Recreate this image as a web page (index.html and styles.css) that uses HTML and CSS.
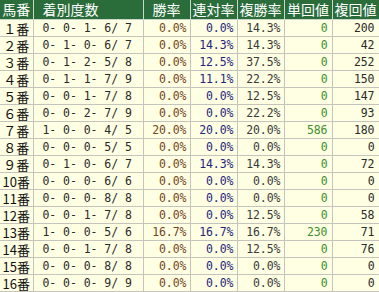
FILE: index.html
```html
<!DOCTYPE html>
<html lang="ja">
<head>
<meta charset="utf-8">
<title>馬番別成績</title>
<link rel="stylesheet" href="styles.css">
</head>
<body>
<table class="stats">
  <colgroup>
    <col class="c-no"><col class="c-rec"><col class="c-pct"><col class="c-pct"><col class="c-pct"><col class="c-val"><col class="c-val2">
  </colgroup>
  <thead>
    <tr><th>馬番</th><th class="h-rec">着別度数</th><th>勝率</th><th>連対率</th><th>複勝率</th><th>単回値</th><th>複回値</th></tr>
  </thead>
  <tbody>
    <tr><td class="no">１番</td><td class="rec">0- 0- 1- 6/ 7</td><td class="win">0.0%</td><td class="ren">0.0%</td><td class="fuku">14.3%</td><td class="tan">0</td><td class="fv">200</td></tr>
    <tr><td class="no">２番</td><td class="rec">0- 1- 0- 6/ 7</td><td class="win">0.0%</td><td class="ren">14.3%</td><td class="fuku">14.3%</td><td class="tan">0</td><td class="fv">42</td></tr>
    <tr><td class="no">３番</td><td class="rec">0- 1- 2- 5/ 8</td><td class="win">0.0%</td><td class="ren">12.5%</td><td class="fuku">37.5%</td><td class="tan">0</td><td class="fv">252</td></tr>
    <tr><td class="no">４番</td><td class="rec">0- 1- 1- 7/ 9</td><td class="win">0.0%</td><td class="ren">11.1%</td><td class="fuku">22.2%</td><td class="tan">0</td><td class="fv">150</td></tr>
    <tr><td class="no">５番</td><td class="rec">0- 0- 1- 7/ 8</td><td class="win">0.0%</td><td class="ren">0.0%</td><td class="fuku">12.5%</td><td class="tan">0</td><td class="fv">147</td></tr>
    <tr><td class="no">６番</td><td class="rec">0- 0- 2- 7/ 9</td><td class="win">0.0%</td><td class="ren">0.0%</td><td class="fuku">22.2%</td><td class="tan">0</td><td class="fv">93</td></tr>
    <tr><td class="no">７番</td><td class="rec">1- 0- 0- 4/ 5</td><td class="win">20.0%</td><td class="ren">20.0%</td><td class="fuku">20.0%</td><td class="tan">586</td><td class="fv">180</td></tr>
    <tr><td class="no">８番</td><td class="rec">0- 0- 0- 5/ 5</td><td class="win">0.0%</td><td class="ren">0.0%</td><td class="fuku">0.0%</td><td class="tan">0</td><td class="fv">0</td></tr>
    <tr><td class="no">９番</td><td class="rec">0- 1- 0- 6/ 7</td><td class="win">0.0%</td><td class="ren">14.3%</td><td class="fuku">14.3%</td><td class="tan">0</td><td class="fv">72</td></tr>
    <tr><td class="no">10番</td><td class="rec">0- 0- 0- 6/ 6</td><td class="win">0.0%</td><td class="ren">0.0%</td><td class="fuku">0.0%</td><td class="tan">0</td><td class="fv">0</td></tr>
    <tr><td class="no">11番</td><td class="rec">0- 0- 0- 8/ 8</td><td class="win">0.0%</td><td class="ren">0.0%</td><td class="fuku">0.0%</td><td class="tan">0</td><td class="fv">0</td></tr>
    <tr><td class="no">12番</td><td class="rec">0- 0- 1- 7/ 8</td><td class="win">0.0%</td><td class="ren">0.0%</td><td class="fuku">12.5%</td><td class="tan">0</td><td class="fv">58</td></tr>
    <tr><td class="no">13番</td><td class="rec">1- 0- 0- 5/ 6</td><td class="win">16.7%</td><td class="ren">16.7%</td><td class="fuku">16.7%</td><td class="tan">230</td><td class="fv">71</td></tr>
    <tr><td class="no">14番</td><td class="rec">0- 0- 1- 7/ 8</td><td class="win">0.0%</td><td class="ren">0.0%</td><td class="fuku">12.5%</td><td class="tan">0</td><td class="fv">76</td></tr>
    <tr><td class="no">15番</td><td class="rec">0- 0- 0- 8/ 8</td><td class="win">0.0%</td><td class="ren">0.0%</td><td class="fuku">0.0%</td><td class="tan">0</td><td class="fv">0</td></tr>
    <tr><td class="no">16番</td><td class="rec">0- 0- 0- 9/ 9</td><td class="win">0.0%</td><td class="ren">0.0%</td><td class="fuku">0.0%</td><td class="tan">0</td><td class="fv">0</td></tr>
  </tbody>
</table>
</body>
</html>
```
FILE: styles.css
```css
html, body {
  margin: 0;
  padding: 0;
  background: #ffffff;
}

.stats {
  border-collapse: collapse;
  table-layout: fixed;
  width: 379px;
  font-family: "DejaVu Sans Mono", monospace;
}

.c-no { width: 33px; }
.c-rec { width: 110px; }
.c-pct { width: 47px; }
.c-val { width: 48px; }
.c-val2 { width: 47px; }

.stats th {
  background: #2a6d3b;
  color: #ffffff;
  font-family: "Noto Sans CJK JP", sans-serif;
  font-weight: normal;
  font-size: 14px;
  height: 19px;
  line-height: 19px;
  padding: 0;
  text-align: center;
  white-space: nowrap;
  border: 1px solid #c9d6c9;
  border-top: none;
}

.stats th:first-child { border-left: none; }

.stats th.h-rec {
  text-align: left;
  padding-left: 9px;
}

.stats td {
  background: #ffffe3;
  height: 16px;
  line-height: 15px;
  padding: 0 4px 0 0;
  border: 1px solid #c4c4bc;
  font-size: 11.5px;
  letter-spacing: -0.05px;
  text-align: right;
  white-space: pre;
  color: #333333;
}

.stats td:first-child { border-left: none; }

.stats td.no {
  font-family: "Noto Sans CJK JP", sans-serif;
  font-size: 13px;
  line-height: 15px;
  letter-spacing: 0;
  text-align: center;
  padding: 0;
  color: #111111;
}

.stats td.rec {
  text-align: left;
  padding-left: 9px;
  color: #2a2a2a;
}

.stats td.win { color: #74451c; padding-right: 3px; }
.stats td.ren { color: #25257e; padding-right: 3px; }
.stats td.fuku { color: #3a3a3a; padding-right: 3px; }
.stats td.tan { color: #3a8f2c; }
.stats td.fv { color: #2a2a2a; }
```
